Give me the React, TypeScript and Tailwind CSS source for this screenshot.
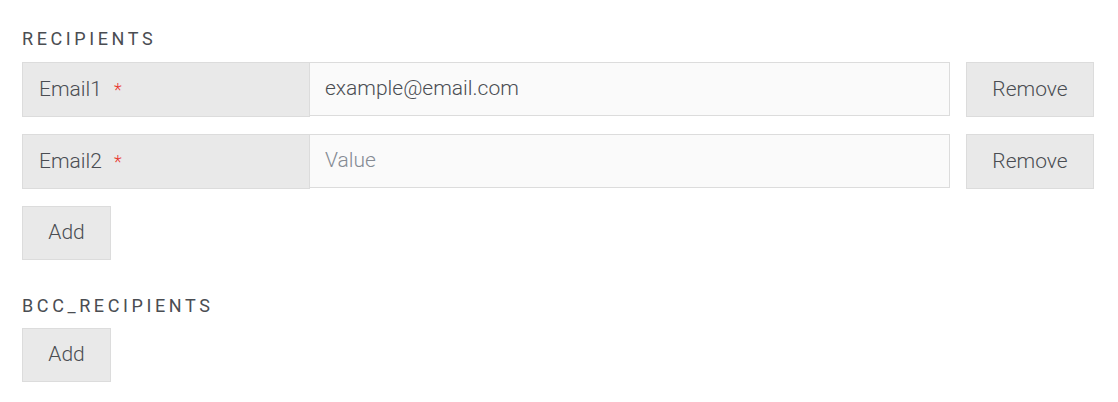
import React from "react";

const font = { fontFamily: "Roboto, 'Liberation Sans', sans-serif" };

function Heading({ children }: { children: React.ReactNode }) {
  return (
    <div className="h-[20px] text-[18px] leading-[20px] tracking-[0.2em] text-[#4a4d52]">
      {children}
    </div>
  );
}

function Row({ label, value }: { label: string; value?: string }) {
  return (
    <div className="flex items-start">
      <div className="flex h-[55px] w-[288px] shrink-0 items-center border border-[#dcdcdc] bg-[#e9e9e9] pb-[2px] pl-[16px] text-[21px] font-light leading-[24px] text-[#4a4d52]">
        <span>{label}</span>
        <span className="ml-[12px] text-[18px] leading-[24px] text-[#e8392f] translate-y-[1px]">*</span>
      </div>
      <input
        className="h-[54px] w-[640px] border border-l-0 border-[#dcdcdc] bg-[#fafafa] px-[15px] pb-[2px] text-[21px] font-light text-[#4a4d52] placeholder:text-[#858b94] outline-none"
        placeholder="Value"
        defaultValue={value}
      />
      <button className="ml-[16px] h-[55px] w-[128px] border border-[#dcdcdc] bg-[#e9e9e9] pb-[2px] text-[21px] font-light leading-[24px] text-[#4a4d52]">
        Remove
      </button>
    </div>
  );
}

function AddButton() {
  return (
    <button className="h-[54px] w-[89px] border border-[#dcdcdc] bg-[#e9e9e9] pb-[2px] text-[21px] font-light leading-[24px] text-[#4a4d52]">
      Add
    </button>
  );
}

export default function App() {
  return (
    <div className="min-h-[402px] w-[1118px] bg-white pl-[22px] pt-[29px]" style={font}>
      <Heading>RECIPIENTS</Heading>
      <div className="mt-[13px] flex flex-col gap-[17px]">
        <Row label="Email1" value="example@email.com" />
        <Row label="Email2" />
        <div>
          <AddButton />
        </div>
      </div>
      <div className="mt-[36px]">
        <Heading>BCC_RECIPIENTS</Heading>
      </div>
      <div className="mt-[12px]">
        <AddButton />
      </div>
    </div>
  );
}
